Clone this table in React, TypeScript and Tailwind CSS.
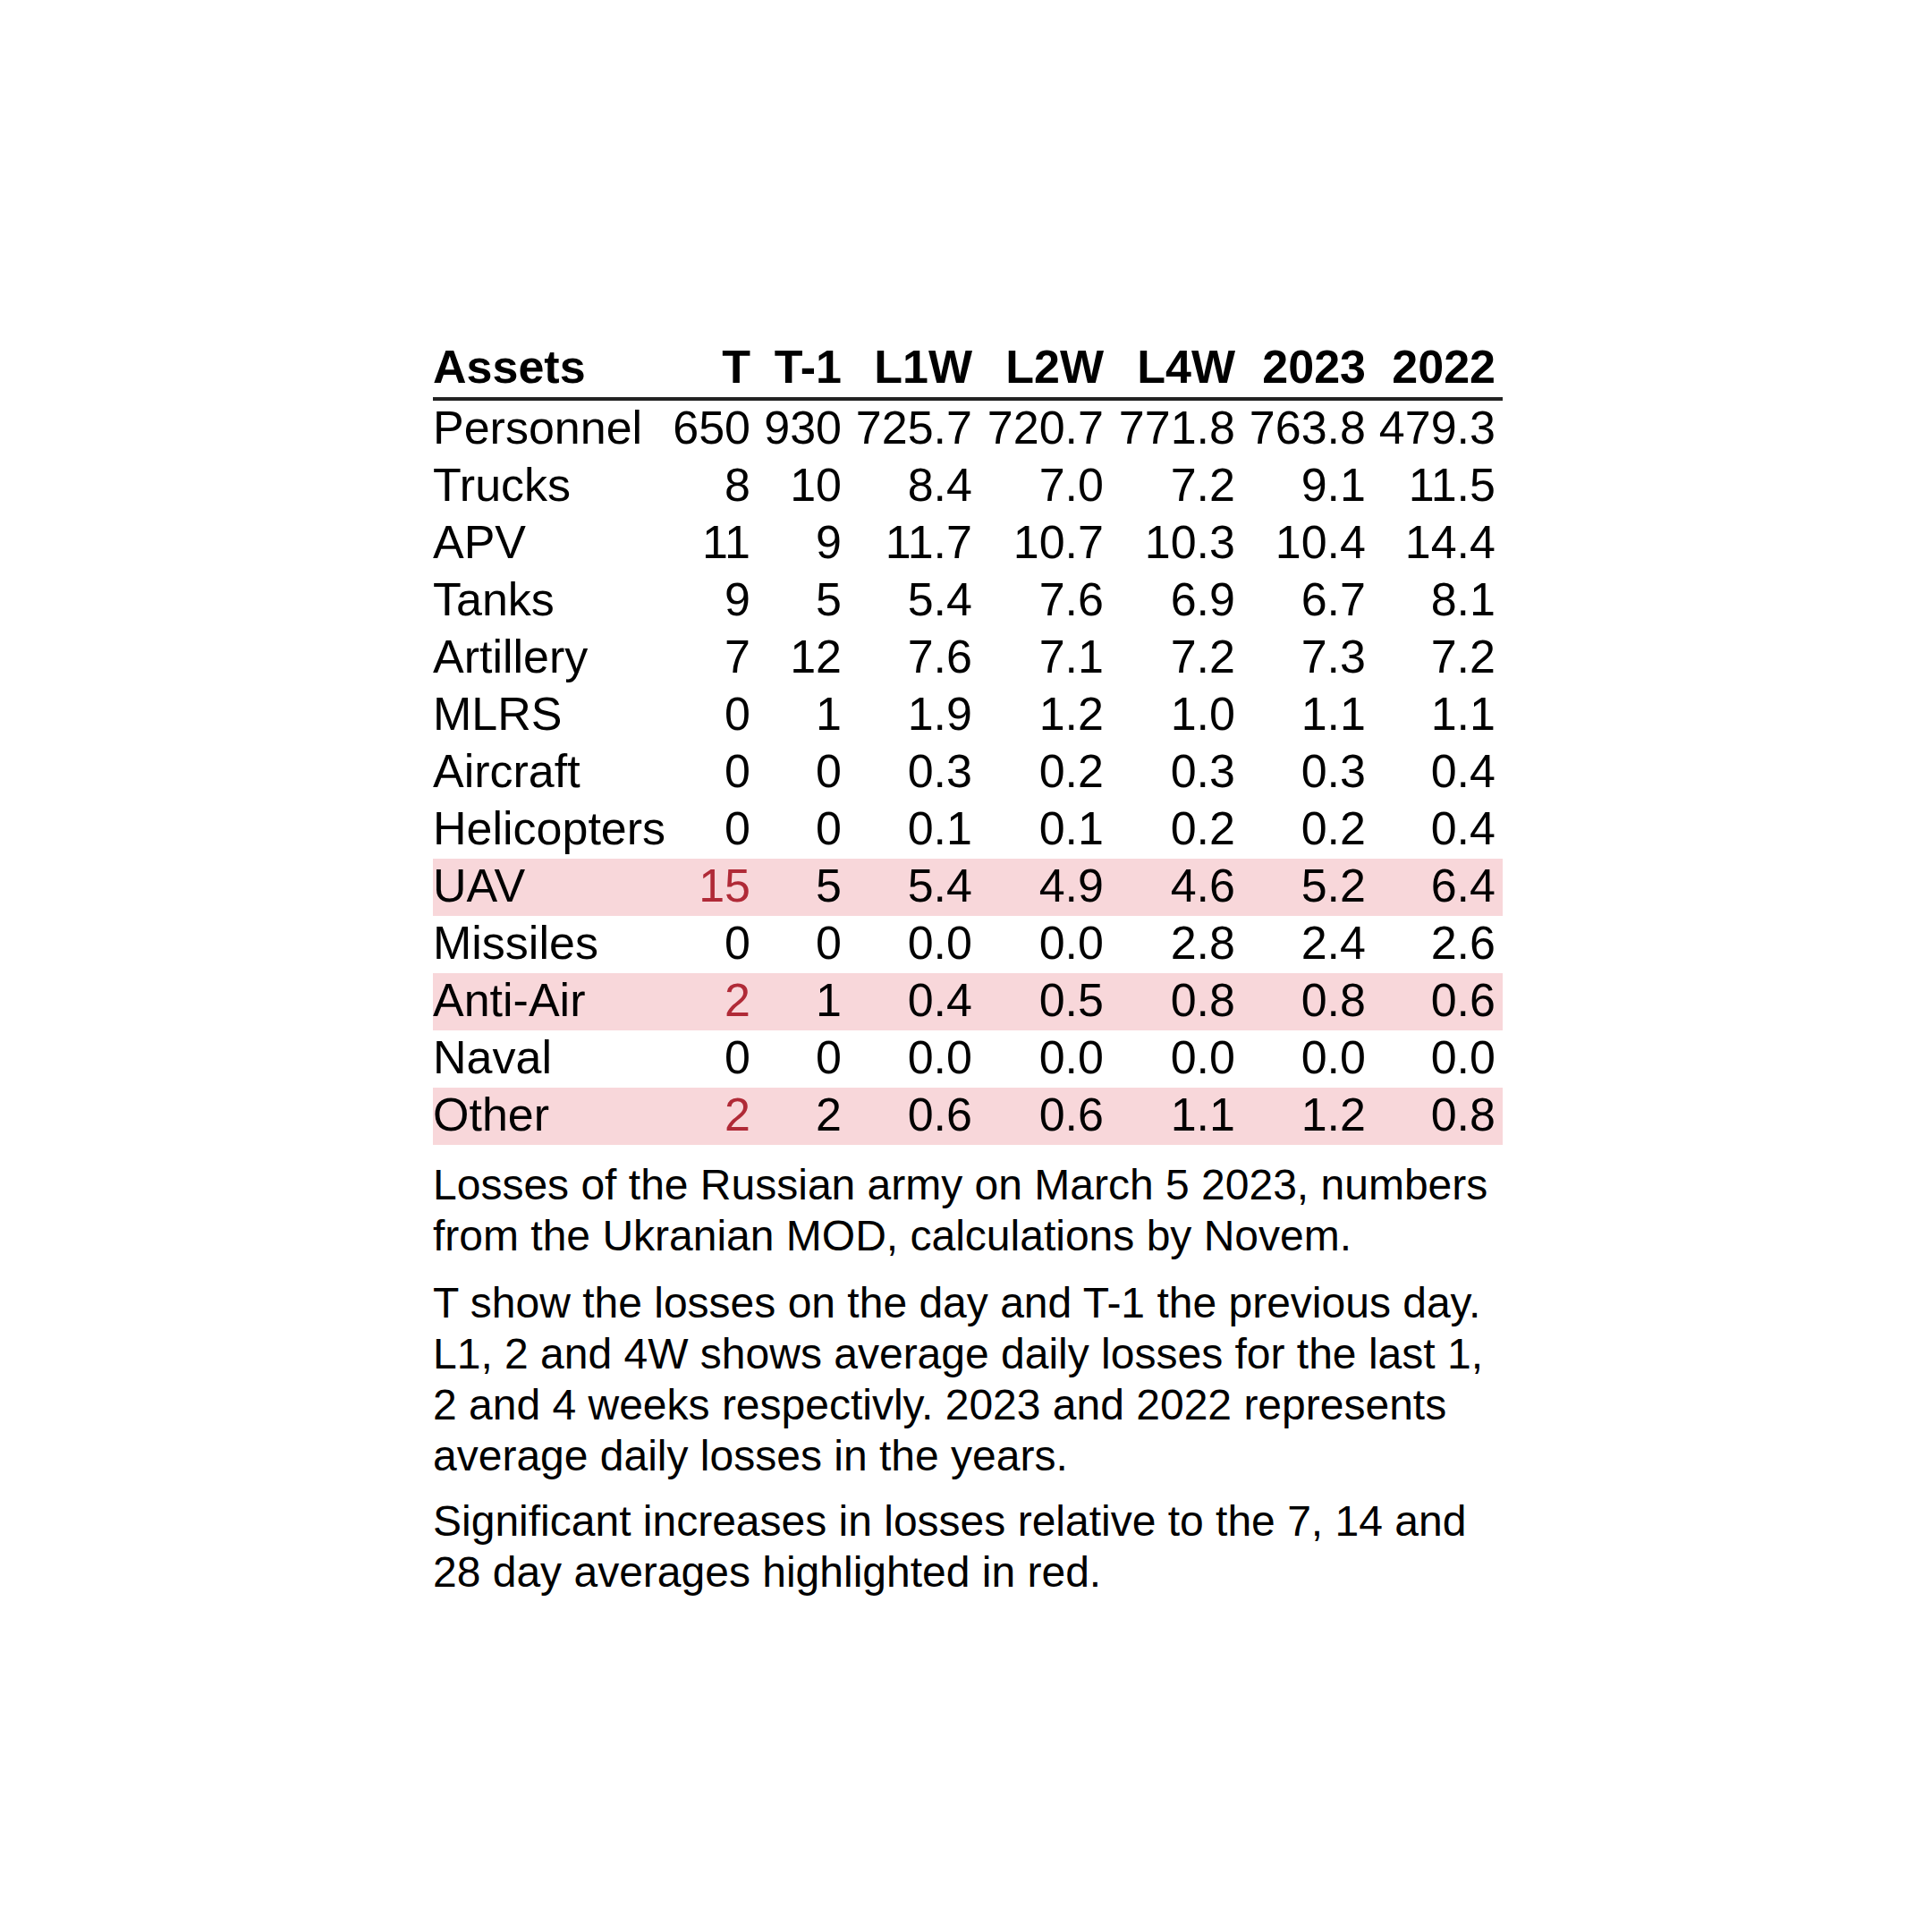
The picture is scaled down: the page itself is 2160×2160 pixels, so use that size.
const columns = ["T", "T-1", "L1W", "L2W", "L4W", "2023", "2022"];

// right padding per column, tuned to the reference
const pads = ["pr-[8px]", "pr-[9px]", "pr-[6px]", "pr-[6px]", "pr-[6px]", "pr-[6px]", "pr-[8px]"];

type Row = {
  name: string;
  values: string[];
  flagged?: boolean;
};

const rows: Row[] = [
  { name: "Personnel", values: ["650", "930", "725.7", "720.7", "771.8", "763.8", "479.3"] },
  { name: "Trucks", values: ["8", "10", "8.4", "7.0", "7.2", "9.1", "11.5"] },
  { name: "APV", values: ["11", "9", "11.7", "10.7", "10.3", "10.4", "14.4"] },
  { name: "Tanks", values: ["9", "5", "5.4", "7.6", "6.9", "6.7", "8.1"] },
  { name: "Artillery", values: ["7", "12", "7.6", "7.1", "7.2", "7.3", "7.2"] },
  { name: "MLRS", values: ["0", "1", "1.9", "1.2", "1.0", "1.1", "1.1"] },
  { name: "Aircraft", values: ["0", "0", "0.3", "0.2", "0.3", "0.3", "0.4"] },
  { name: "Helicopters", values: ["0", "0", "0.1", "0.1", "0.2", "0.2", "0.4"] },
  { name: "UAV", values: ["15", "5", "5.4", "4.9", "4.6", "5.2", "6.4"], flagged: true },
  { name: "Missiles", values: ["0", "0", "0.0", "0.0", "2.8", "2.4", "2.6"] },
  { name: "Anti-Air", values: ["2", "1", "0.4", "0.5", "0.8", "0.8", "0.6"], flagged: true },
  { name: "Naval", values: ["0", "0", "0.0", "0.0", "0.0", "0.0", "0.0"] },
  { name: "Other", values: ["2", "2", "0.6", "0.6", "1.1", "1.2", "0.8"], flagged: true },
];

const grid = "grid grid-cols-[263px_100px_103px_143px_147px_147px_146px_147px]";

export default function App() {
  return (
    <div className="min-h-[2160px] bg-white font-['Liberation_Sans',Arial,sans-serif] text-black">
      <div className="ml-[484px] w-[1196px] pt-[382px]">
        <div className="text-[52px]">
          <div className={`${grid} border-b-4 border-[#222] pb-[5px] font-bold leading-[57px]`}>
            <div>Assets</div>
            {columns.map((c, i) => (
              <div key={c} className={`${pads[i]} text-right`}>
                {c}
              </div>
            ))}
          </div>

          {rows.map((row) => (
            <div
              key={row.name}
              className={`${grid} h-[64px] leading-[60px] ${row.flagged ? "bg-[#f8d7da]" : ""}`}
            >
              <div className="whitespace-nowrap">{row.name}</div>
              {row.values.map((v, i) => (
                <div
                  key={i}
                  className={`${pads[i]} text-right ${row.flagged && i === 0 ? "text-[#b02a37]" : ""}`}
                >
                  {v}
                </div>
              ))}
            </div>
          ))}
        </div>

        <div className="text-[48px] leading-[57px]">
          <p className="mt-4">
            Losses of the Russian army on March 5 2023, numbers from the Ukranian MOD, calculations by Novem.
          </p>
          <p className="mt-[18px]">
            T show the losses on the day and T-1 the previous day. L1, 2 and 4W shows average daily losses for the
            last 1, 2 and 4 weeks respectivly. 2023 and 2022 represents average daily losses in the years.
          </p>
          <p className="mt-4">
            Significant increases in losses relative to the 7, 14 and 28 day averages highlighted in red.
          </p>
        </div>
      </div>
    </div>
  );
}
